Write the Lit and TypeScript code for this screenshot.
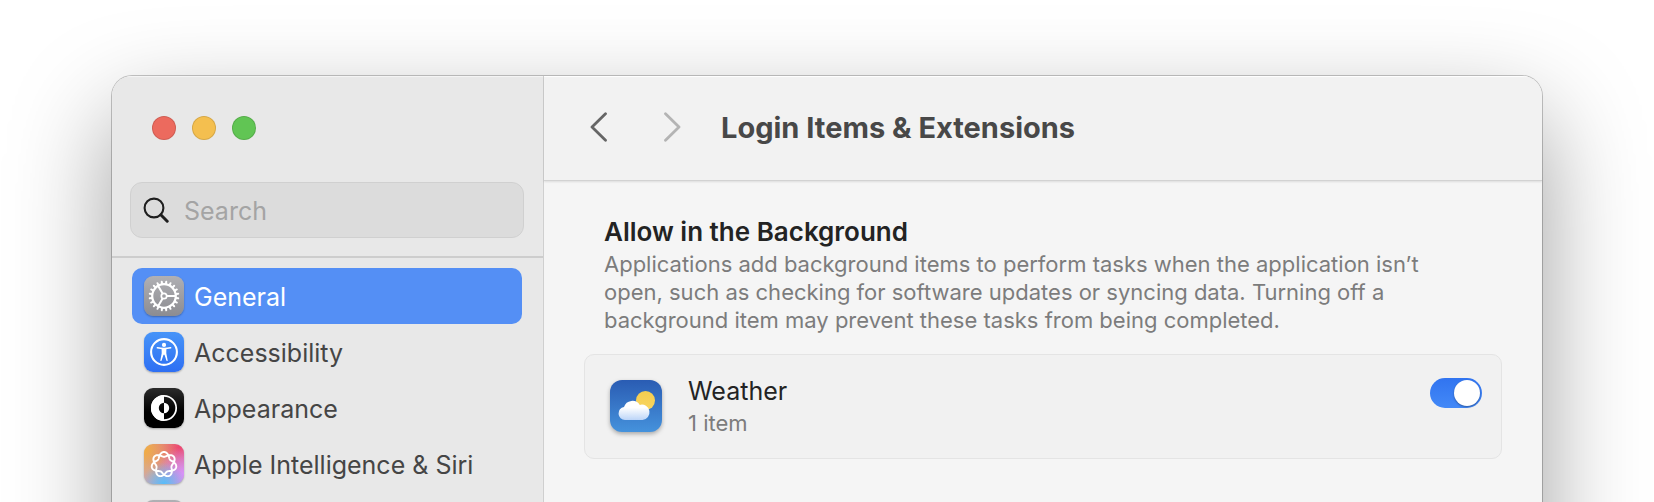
import { LitElement, html, svg, css } from "lit";
import { customElement, property, state } from "lit/decorators.js";
import { classMap } from "lit/directives/class-map.js";

/** Closed two-turn rosette whose strands cross between its seven petals. */
function rosettePath(cx: number, cy: number, radius: number, wave: number): string {
  const steps = 280;
  const points: string[] = [];
  for (let i = 0; i < steps; i++) {
    const t = (i / steps) * Math.PI * 4;
    const r = radius + wave * Math.cos(3.5 * t);
    points.push(`${(cx + r * Math.sin(t)).toFixed(2)} ${(cy - r * Math.cos(t)).toFixed(2)}`);
  }
  return `M${points.join("L")}Z`;
}

const gearTeeth = Array.from({ length: 20 }, (_, i) => 9 + i * 18);

const glyphs = {
  general: svg`
    <g fill="none" stroke="#fff">
      <circle cx="20" cy="20" r="11.8" stroke-width="2.2"/>
      <circle cx="20" cy="20" r="2.7" stroke-width="1.7"/>
      <path d="M22.8 20H31.5M18.6 17.5L14.2 9.9M18.6 22.5L14.2 30.1" stroke-width="2"/>
      ${gearTeeth.map(
        (a) => svg`<path d="M20 7.6V5.6" stroke-width="2" stroke-linecap="round" transform="rotate(${a} 20 20)"/>`
      )}
    </g>`,
  accessibility: svg`
    <circle cx="20" cy="20" r="12.9" fill="none" stroke="#fff" stroke-width="2.1"/>
    <circle cx="20" cy="12.9" r="2.1" fill="#fff"/>
    <path d="M13.4 15.8C15.4 16.3 17.6 16.6 20 16.6S24.6 16.3 26.6 15.8" fill="none" stroke="#fff" stroke-width="1.6" stroke-linecap="round"/>
    <path d="M17.6 16.3H22.4L22.3 21.2L23.7 28.4Q23.5 29.4 22.5 28.8L20.5 22.8H19.5L17.5 28.8Q16.5 29.4 16.3 28.4L17.7 21.2Z" fill="#fff"/>`,
  appearance: svg`
    <circle cx="20" cy="20" r="12.2" fill="none" stroke="#fff" stroke-width="1.7"/>
    <path d="M20 7A13 13 0 0 0 20 33V25.2A5.2 5.2 0 0 1 20 14.8Z" fill="#fff"/>
    <path d="M20 14.8A5.2 5.2 0 0 1 20 25.2Z" fill="#fff"/>`,
  siri: svg`
    <path d="${rosettePath(20, 20.5, 10.1, 2.4)}" fill="none" stroke="#fff" stroke-width="1.9"/>`,
  blank: svg``,
};

type GlyphName = keyof typeof glyphs;

@customElement("settings-icon")
class SettingsIcon extends LitElement {
  @property() name: GlyphName = "general";

  static styles = css`
    :host {
      display: block;
      flex: none;
      width: 40px;
      height: 40px;
    }
    .tile {
      width: 100%;
      height: 100%;
      border-radius: 9px;
      box-shadow: 0 1px 2px rgba(0, 0, 0, 0.28);
    }
    .general,
    .blank {
      background: linear-gradient(#b0b0b4, #8c8c91);
    }
    .accessibility {
      background: linear-gradient(#4794f8, #2e6ff3);
    }
    .appearance {
      background: linear-gradient(#2b2b2b, #000 60%);
    }
    .siri {
      background:
        radial-gradient(circle at 50% 100%, #55bdfa 0%, rgba(85, 189, 250, 0) 48%),
        radial-gradient(circle at 100% 75%, #d792fb 0%, rgba(215, 146, 251, 0) 55%),
        radial-gradient(circle at 0% 15%, #f3ac3e 0%, rgba(243, 172, 62, 0) 65%),
        radial-gradient(circle at 90% 10%, #ee456c 0%, rgba(238, 69, 108, 0) 75%),
        #c9a6bd;
    }
    svg {
      display: block;
    }
  `;

  render() {
    return html`<div class="tile ${this.name}">
      <svg viewBox="0 0 40 40" width="40" height="40" aria-hidden="true">${glyphs[this.name]}</svg>
    </div>`;
  }
}

interface Section {
  id: GlyphName;
  label: string;
}

const sections: Section[] = [
  { id: "general", label: "General" },
  { id: "accessibility", label: "Accessibility" },
  { id: "appearance", label: "Appearance" },
  { id: "siri", label: "Apple Intelligence & Siri" },
];

@customElement("settings-sidebar")
class SettingsSidebar extends LitElement {
  @state() private selected: GlyphName = "general";

  static styles = css`
    :host {
      display: flex;
      flex-direction: column;
      background: #e8e8e8;
      border-right: 1px solid #cfcfcf;
      box-shadow: inset 0 1px 1px #f6f6f6;
      color: #454545;
    }
    .lights {
      display: flex;
      gap: 16px;
      padding: 40px 40px 42px;
    }
    .light {
      width: 24px;
      height: 24px;
      padding: 0;
      border: 1px solid rgba(0, 0, 0, 0.12);
      border-radius: 50%;
    }
    .close {
      background: #ec6a5e;
    }
    .minimize {
      background: #f4bf4f;
    }
    .zoom {
      background: #61c554;
    }
    .search {
      display: flex;
      align-items: center;
      gap: 15px;
      height: 56px;
      box-sizing: border-box;
      margin: 0 19px 18px 18px;
      padding: 0 12px;
      border: 1px solid #d0d0d0;
      border-radius: 12px;
      background: #dcdcdc;
    }
    .search svg {
      flex: none;
    }
    .field {
      flex: 1;
      min-width: 0;
      padding: 2px 0 0;
      border: 0;
      outline: 0;
      background: none;
      color: #262626;
      font: inherit;
    }
    .field::placeholder {
      color: #a4a4a4;
      opacity: 1;
    }
    .list {
      display: flex;
      flex-direction: column;
      margin: 0;
      padding: 10px 21px 10px 20px;
      border-top: 2px solid #cdcdcd;
      list-style: none;
    }
    .row {
      display: flex;
      align-items: center;
      gap: 10px;
      height: 56px;
      padding: 0 12px;
      border-radius: 10px;
      color: inherit;
      text-decoration: none;
      white-space: nowrap;
    }
    .label {
      padding-top: 2px;
    }
    .selected {
      background: #548ff5;
      color: #fff;
    }
  `;

  render() {
    return html`
      <div class="lights">
        <button class="light close" aria-label="Close"></button>
        <button class="light minimize" aria-label="Minimize"></button>
        <button class="light zoom" aria-label="Zoom"></button>
      </div>
      <label class="search">
        <svg width="26" height="26" viewBox="0 0 26 26" fill="none" stroke="#1f1f1f" aria-hidden="true">
          <circle cx="11" cy="11" r="9.4" stroke-width="2.1" />
          <path d="M17.8 17.8L24.2 24.2" stroke-width="3" stroke-linecap="round" />
        </svg>
        <input class="field" type="text" placeholder="Search" aria-label="Search" />
      </label>
      <ul class="list">
        ${sections.map(
          (s) => html`<li>
            <a
              class=${classMap({ row: true, selected: s.id === this.selected })}
              href="#${s.id}"
              @click=${() => (this.selected = s.id)}
            >
              <settings-icon .name=${s.id}></settings-icon>
              <span class="label">${s.label}</span>
            </a>
          </li>`
        )}
        <li class="row" aria-hidden="true"><settings-icon .name=${"blank" as GlyphName}></settings-icon></li>
      </ul>
    `;
  }
}

@customElement("background-item")
class BackgroundItem extends LitElement {
  @property() name = "";
  @property() detail = "";
  @state() private enabled = true;

  static styles = css`
    :host {
      display: flex;
      align-items: flex-start;
      padding: 23px 19px 22px 25px;
      border: 1px solid #e4e4e4;
      border-radius: 10px;
      background: #f1f1f1;
    }
    .app {
      flex: none;
      margin: 2px 26px 0 0;
      filter: drop-shadow(0 2px 2px rgba(0, 0, 0, 0.3));
    }
    .text {
      flex: 1;
      display: flex;
      flex-direction: column;
      gap: 6px;
    }
    .name {
      color: #232323;
      font-size: 25px;
      line-height: 26px;
    }
    .detail {
      color: #7c7c7c;
      font-size: 22px;
      line-height: 26px;
    }
    .switch {
      appearance: none;
      flex: none;
      display: flex;
      justify-content: flex-start;
      box-sizing: border-box;
      width: 52px;
      height: 30px;
      margin: 0;
      padding: 2px;
      border-radius: 15px;
      background: #c9c9c9;
    }
    .switch::before {
      content: "";
      width: 26px;
      height: 26px;
      border-radius: 50%;
      background: #fff;
      box-shadow: 0 1px 2px rgba(0, 0, 0, 0.35);
    }
    .switch:checked {
      justify-content: flex-end;
      background: linear-gradient(#3174f0, #4389f7);
    }
  `;

  render() {
    return html`
      <svg class="app" width="52" height="52" viewBox="0 0 52 52" aria-hidden="true">
        <defs>
          <linearGradient id="sky" x1="0" y1="0" x2="0" y2="1">
            <stop offset="0" stop-color="#2a5cb3" />
            <stop offset="1" stop-color="#4592dc" />
          </linearGradient>
          <linearGradient id="cloud" x1="0" y1="0" x2="0" y2="1">
            <stop offset="0.35" stop-color="#fff" />
            <stop offset="1" stop-color="#bcd5f8" />
          </linearGradient>
          <linearGradient id="sun" x1="0" y1="0" x2="0" y2="1">
            <stop offset="0" stop-color="#f4cd4f" />
            <stop offset="1" stop-color="#f8d560" />
          </linearGradient>
        </defs>
        <rect width="52" height="52" rx="12" fill="url(#sky)" />
        <circle cx="35.5" cy="20.5" r="9.5" fill="url(#sun)" />
        <path
          d="M15 40a6.6 6.6 0 0 1-1-13.1A8.8 8.8 0 0 1 29.8 24.9A7.7 7.7 0 1 1 32.5 40Z"
          fill="url(#cloud)"
        />
      </svg>
      <label class="text" for="enabled">
        <span class="name">${this.name}</span>
        <span class="detail">${this.detail}</span>
      </label>
      <input
        id="enabled"
        class="switch"
        type="checkbox"
        role="switch"
        .checked=${this.enabled}
        @change=${(e: Event) => (this.enabled = (e.target as HTMLInputElement).checked)}
      />
    `;
  }
}

@customElement("app-root")
class AppRoot extends LitElement {
  static styles = css`
    :host {
      display: flow-root;
      box-sizing: border-box;
      height: 100vh;
      padding: 76px 112px 0;
      overflow: hidden;
      background: #fff;
      font-family: Inter, "Liberation Sans", sans-serif;
      font-size: 25px;
      line-height: 32px;
    }
    .window {
      display: grid;
      grid-template-columns: 432px minmax(0, 1fr);
      min-height: 150vh;
      border-radius: 20px;
      overflow: hidden;
      background: #f5f5f5;
      box-shadow:
        0 0 0 1px rgba(0, 0, 0, 0.22),
        0 40px 100px rgba(0, 0, 0, 0.39);
    }
    .toolbar {
      display: flex;
      align-items: center;
      box-sizing: border-box;
      height: 105px;
      padding: 0 43px;
      border-bottom: 1px solid #d2d2d2;
      background: #f2f2f2;
      box-shadow:
        inset 0 1px 1px #fff,
        0 1px 2px rgba(0, 0, 0, 0.1);
    }
    .arrow {
      display: flex;
      margin-right: 49px;
      padding: 0;
      border: 0;
      background: none;
      color: #666;
    }
    .arrow:disabled {
      margin-right: 37px;
      color: #b4b4b4;
    }
    .title {
      margin: 0;
      color: #484848;
      font-size: 29px;
      font-weight: 700;
      line-height: 36px;
    }
    .content {
      padding: 35px 40px;
    }
    .intro {
      display: flex;
      flex-direction: column;
      gap: 2px;
      padding: 0 20px 20px;
    }
    .heading {
      margin: 0;
      color: #232323;
      font-size: 26px;
      font-weight: 600;
      line-height: 32px;
    }
    .note {
      max-width: 840px;
      margin: 0;
      color: #7c7c7c;
      font-size: 22px;
      line-height: 28px;
    }
  `;

  render() {
    return html`
      <div class="window">
        <settings-sidebar></settings-sidebar>
        <main>
          <header class="toolbar">
            <button class="arrow" aria-label="Back">
              <svg width="24" height="32" viewBox="0 0 24 32" fill="none" stroke="currentColor" stroke-width="2.8" stroke-linecap="round" stroke-linejoin="round" aria-hidden="true">
                <path d="M18.5 1.8L5 15L18.5 28.2" />
              </svg>
            </button>
            <button class="arrow" aria-label="Forward" disabled>
              <svg width="24" height="32" viewBox="0 0 24 32" fill="none" stroke="currentColor" stroke-width="2.8" stroke-linecap="round" stroke-linejoin="round" aria-hidden="true">
                <path d="M5.5 1.8L19 15L5.5 28.2" />
              </svg>
            </button>
            <h1 class="title">Login Items &amp; Extensions</h1>
          </header>
          <section class="content">
            <div class="intro">
              <h2 class="heading">Allow in the Background</h2>
              <p class="note">
                Applications add background items to perform tasks when the application isn’t open, such as
                checking for software updates or syncing data. Turning off a background item may prevent these
                tasks from being completed.
              </p>
            </div>
            <background-item name="Weather" detail="1 item"></background-item>
          </section>
        </main>
      </div>
    `;
  }
}
